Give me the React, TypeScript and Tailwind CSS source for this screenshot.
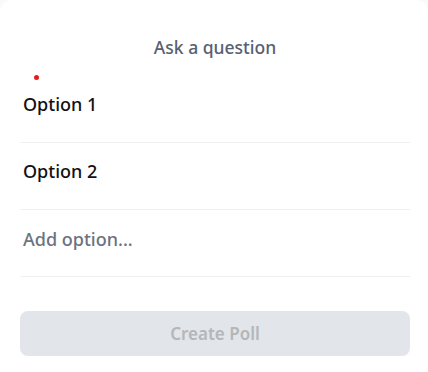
const options = ["Option 1", "Option 2"];

export default function App() {
  return (
    <div className="h-[372px] w-[428px] bg-gray-50" style={{ fontFamily: '"Noto Sans", "Open Sans", sans-serif' }}>
      <div className="flex h-full w-full flex-col rounded-t-xl bg-white pl-5 pr-[18px]">
        <div className="relative h-[76px] pt-[35px] text-center">
          <h2 className="text-[17.5px] leading-6 font-medium text-[#566072]">Ask a question</h2>
          <span className="absolute left-[14px] top-[75px] h-[5px] w-[5px] rounded-full bg-[#e11d1d]" />
        </div>

        {options.map((o) => (
          <div key={o} className="h-[67px] border-b border-[#f0f0f0] pl-[3px] pt-[17px]">
            <span className="text-[18px] leading-[22px] font-medium text-[#111]">{o}</span>
          </div>
        ))}
        <div className="h-[67px] border-b border-[#f0f0f0] pl-[3px] pt-[18px]">
          <span className="text-[18px] leading-[22px] font-medium text-[#6b7280]">Add option...</span>
        </div>

        <button
          disabled
          className="mt-[34px] flex h-[45px] w-full items-center justify-center rounded-lg bg-[#e2e5e9] text-[17px] font-semibold text-[#b4b6ba]"
        >
          Create Poll
        </button>
      </div>
    </div>
  );
}
